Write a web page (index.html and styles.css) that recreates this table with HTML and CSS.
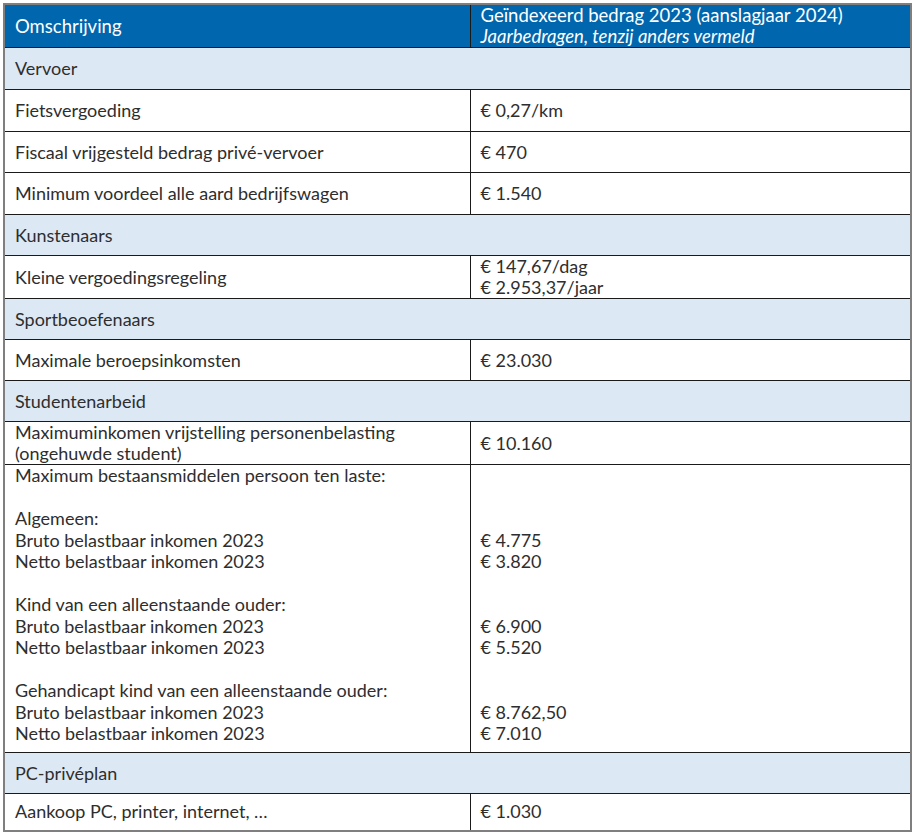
FILE: index.html
```html
<!DOCTYPE html>
<html lang="nl">
<head>
<meta charset="utf-8">
<link rel="stylesheet" href="styles.css">
</head>
<body>
<table class="tbl">
  <colgroup><col class="c1"><col class="c2"></colgroup>
  <thead>
    <tr class="h42">
      <th>Omschrijving</th>
      <th>Geïndexeerd bedrag 2023 (aanslagjaar 2024)<br><em>Jaarbedragen, tenzij anders vermeld</em></th>
    </tr>
  </thead>
  <tbody>
    <tr class="sec h42"><td colspan="2">Vervoer</td></tr>
    <tr class="h42"><td>Fietsvergoeding</td><td>€ 0,27/km</td></tr>
    <tr class="h41"><td>Fiscaal vrijgesteld bedrag privé-vervoer</td><td>€ 470</td></tr>
    <tr class="h42"><td>Minimum voordeel alle aard bedrijfswagen</td><td>€ 1.540</td></tr>
    <tr class="sec h41"><td colspan="2">Kunstenaars</td></tr>
    <tr class="h43"><td>Kleine vergoedingsregeling</td><td class="tight">€ 147,67/dag<br>€ 2.953,37/jaar</td></tr>
    <tr class="sec h41"><td colspan="2">Sportbeoefenaars</td></tr>
    <tr class="h41"><td>Maximale beroepsinkomsten</td><td>€ 23.030</td></tr>
    <tr class="sec h41"><td colspan="2">Studentenarbeid</td></tr>
    <tr class="h43"><td>Maximuminkomen vrijstelling personenbelasting<br>(ongehuwde student)</td><td>€ 10.160</td></tr>
    <tr class="tall">
      <td>Maximum bestaansmiddelen persoon ten laste:<br><br>Algemeen:<br>Bruto belastbaar inkomen 2023<br>Netto belastbaar inkomen 2023<br><br>Kind van een alleenstaande ouder:<br>Bruto belastbaar inkomen 2023<br>Netto belastbaar inkomen 2023<br><br>Gehandicapt kind van een alleenstaande ouder:<br>Bruto belastbaar inkomen 2023<br>Netto belastbaar inkomen 2023</td>
      <td><br><br><br>€ 4.775<br>€ 3.820<br><br><br>€ 6.900<br>€ 5.520<br><br><br>€ 8.762,50<br>€ 7.010</td>
    </tr>
    <tr class="sec h41"><td colspan="2">PC-privéplan</td></tr>
    <tr class="h37"><td>Aankoop PC, printer, internet, …</td><td>€ 1.030</td></tr>
  </tbody>
</table>
</body>
</html>
```

FILE: styles.css
```css
html, body {
  margin: 0;
  padding: 0;
  background: #ffffff;
}
body {
  padding: 3px 0 0 3px;
  font-family: "Lato", "Open Sans", sans-serif;
  font-size: 18px;
  color: #2e2e2e;
}
.tbl {
  border-collapse: collapse;
  width: 907px;
  table-layout: fixed;
  border: 2px solid #7f7f7f;
}
.c1 { width: 466px; }
.c2 { width: 441px; }
.tbl th, .tbl td {
  border: 1px solid #1a1a1a;
  padding: 0 10px;
  vertical-align: middle;
  text-align: left;
  line-height: 21px;
  font-weight: normal;
}
.tbl th {
  background: #0066ad;
  color: #ffffff;
  font-size: 18.5px;
}
.tbl th em { font-style: italic; }
.sec td { background: #dde8f5; }
.h42 { height: 42px; }
.h41 { height: 41px; }
.h43 { height: 43px; }
.h37 { height: 37px; }
.tight { line-height: 20px; }
.tall td {
  vertical-align: top;
  line-height: 21.5px;
  padding-top: 0;
  height: 287px;
}
```
